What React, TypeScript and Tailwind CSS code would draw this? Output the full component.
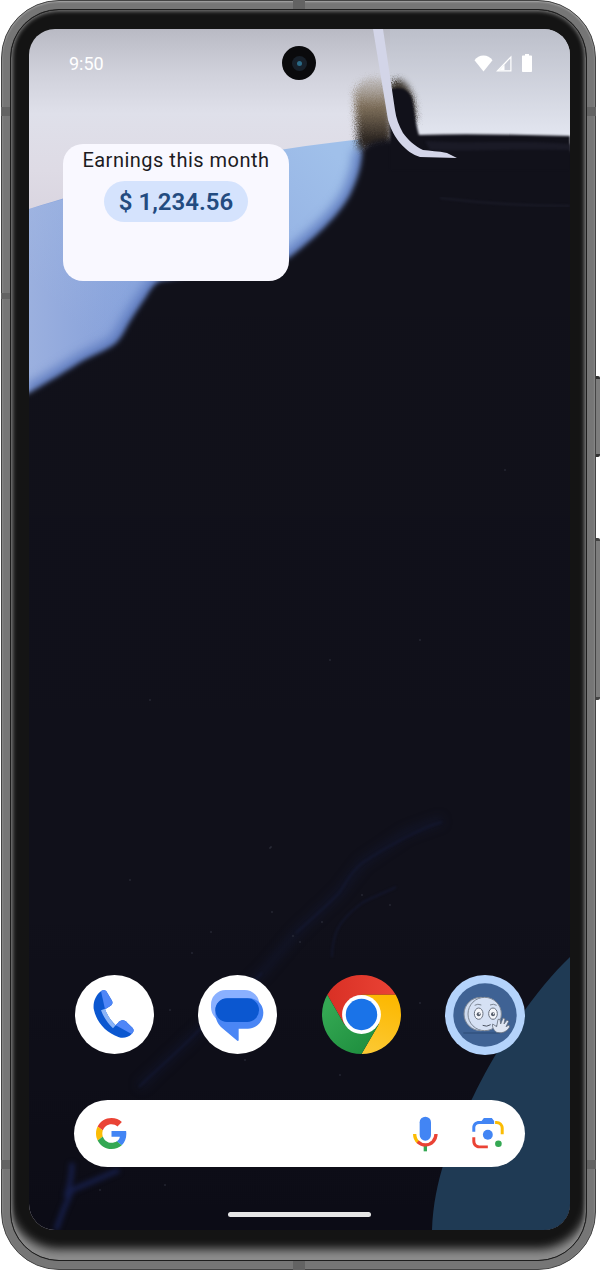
import React from "react";

const BLUE_EDGE =
  "M29 393 C50 381 65 372 79 363 C95 354 108 350 116 343 C122 337 125 330 129 323 C136 312 141 304 146 297 C150 290 154 284 160 281 L289 258 C305 245 335 222 350 195 C358 178 362 165 362 150";

function Wallpaper() {
  const stars: [number, number][] = [
    [211, 932], [270, 848], [192, 953], [170, 1010], [272, 912], [293, 936], [130, 880], [390, 905], [322, 922], [340, 1075], [420, 1003], [165, 1185], [100, 1190], [245, 1060], [505, 470], [420, 640], [150, 700], [330, 660], [271, 847], [362, 895], [300, 942],
  ];
  return (
    <svg className="absolute inset-0 w-full h-full" viewBox="29 29 541 1201" preserveAspectRatio="none">
      <defs>
        <linearGradient id="sky" x1="0" y1="29" x2="0" y2="230" gradientUnits="userSpaceOnUse">
          <stop offset="0" stopColor="#b9bac4" />
          <stop offset="0.22" stopColor="#d0d1db" />
          <stop offset="0.42" stopColor="#dfe0ea" />
          <stop offset="0.7" stopColor="#dedbe5" />
          <stop offset="1" stopColor="#d8d3de" />
        </linearGradient>
        <linearGradient id="sky2" x1="0" y1="29" x2="0" y2="140" gradientUnits="userSpaceOnUse">
          <stop offset="0" stopColor="#bcbfca" />
          <stop offset="1" stopColor="#e4e7f1" />
        </linearGradient>
        <linearGradient id="blue" x1="330" y1="150" x2="110" y2="360" gradientUnits="userSpaceOnUse">
          <stop offset="0" stopColor="#a0c0ea" />
          <stop offset="0.6" stopColor="#8fabe0" />
          <stop offset="1" stopColor="#839ed9" />
        </linearGradient>
        <linearGradient id="haze" x1="29" y1="0" x2="130" y2="0" gradientUnits="userSpaceOnUse">
          <stop offset="0" stopColor="#c8d2ea" stopOpacity="0.35" />
          <stop offset="1" stopColor="#c8d2ea" stopOpacity="0" />
        </linearGradient>
        <linearGradient id="brown" x1="0" y1="78" x2="0" y2="140" gradientUnits="userSpaceOnUse">
          <stop offset="0" stopColor="#8a7c68" stopOpacity="0.25" />
          <stop offset="0.45" stopColor="#6e5c42" stopOpacity="0.85" />
          <stop offset="1" stopColor="#2a2420" />
        </linearGradient>
        <linearGradient id="dark" x1="0" y1="130" x2="0" y2="1230" gradientUnits="userSpaceOnUse">
          <stop offset="0" stopColor="#11111a" />
          <stop offset="0.7" stopColor="#10101a" />
          <stop offset="1" stopColor="#0c0c16" />
        </linearGradient>
        <filter id="b1" colorInterpolationFilters="sRGB"><feGaussianBlur stdDeviation="1" /></filter>
        <filter id="b2" colorInterpolationFilters="sRGB"><feGaussianBlur stdDeviation="2.5" /></filter>
        <filter id="b5" colorInterpolationFilters="sRGB"><feGaussianBlur stdDeviation="5" /></filter>
        <filter id="grain" x="-30%" y="-30%" width="160%" height="160%" colorInterpolationFilters="sRGB">
          <feGaussianBlur stdDeviation="3" result="s" />
          <feTurbulence type="fractalNoise" baseFrequency="0.9" numOctaves="2" result="n" />
          <feDisplacementMap in="s" in2="n" scale="8" />
        </filter>
      </defs>
      <rect x="29" y="29" width="541" height="1201" fill="url(#sky)" />
      <rect x="390" y="29" width="180" height="112" fill="url(#sky2)" />
      <path d="M29 209 C120 180 220 155 362 139 L380 300 L29 430 Z" fill="url(#blue)" />
      <path d="M29 209 L130 180 L130 410 L29 410 Z" fill="url(#haze)" />
      <path d={BLUE_EDGE} stroke="#5b78bd" strokeWidth="18" strokeOpacity="0.8" fill="none" filter="url(#b5)" />
      <path d="M354 92 C362 76 380 72 388 84 L392 145 L358 150 Z" fill="url(#brown)" filter="url(#grain)" />
      <path d="M388 88 C396 72 408 80 414 100 L416 120 L392 130 Z" fill="#3e3830" filter="url(#grain)" />
      <path
        d={`M0 393 L${BLUE_EDGE.slice(1)} C368 142 378 140 388 140 L600 150 L600 1260 L0 1260 Z`}
        fill="url(#dark)"
        filter="url(#b2)"
      />
      <path d="M390 90 C398 86 408 88 412 98 C415 110 415 122 419 135 C470 133 520 135 570 136 L570 170 L390 170 Z" fill="#11111a" filter="url(#b1)" />
      <path d="M425 141 C470 144 520 140 570 144 L570 150 C520 148 470 152 430 150 Z" fill="#1a1a26" filter="url(#b1)" />
      <path d="M373 29 L388 120 C391 130 395 137 400 143 C406 150 413 155 420 157 L457 158 L447 153 C438 151 430 151 423 150 C415 146 408 140 403 133 C399 126 396 118 395 110 L383 29 Z" fill="#d3d5e8" />
      <path d="M440 198 C480 203 530 206 570 206" stroke="#1a1b28" strokeWidth="2" fill="none" filter="url(#b1)" />
      <path d="M442 820 L406 833 L362 863 L339 893 L296 933 L262 973 L196 1033 L139 1087" stroke="#141a36" strokeWidth="8" strokeOpacity="0.5" fill="none" filter="url(#b5)" />
      <path d="M442 822 C420 828 385 848 362 863 C350 872 345 885 339 893 C325 908 310 920 296 933 M396 887 C380 895 370 898 362 903 C350 912 340 922 336 933 C333 942 332 950 332 957 M262 973 C240 995 215 1015 196 1033 C175 1055 150 1075 139 1087" stroke="#151b3c" strokeWidth="2" fill="none" filter="url(#b1)" strokeOpacity="0.5" />
      <path d="M119 1170 C100 1178 85 1185 72 1190 C65 1205 60 1218 56 1230 M72 1163 C72 1175 70 1185 66 1197" stroke="#161e48" strokeWidth="5" fill="none" filter="url(#b2)" />
      {stars.map(([x, y]) => (
        <circle key={`${x}-${y}`} cx={x} cy={y} r="0.7" fill="#3a3d4d" />
      ))}
      <path d="M570 957 C535 990 495 1050 473 1097 C450 1140 434 1180 432 1230 L570 1230 Z" fill="#1f3a54" />
    </svg>
  );
}

function StatusIcons() {
  return (
    <div className="flex justify-end items-center pr-[38px]">
      <svg viewBox="0 0 19 17" className="w-[19px] h-[17px]">
        <path d="M9.5 16.5 L0.5 5.2 C2.6 2.2 5.8 0.5 9.5 0.5 C13.2 0.5 16.4 2.2 18.5 5.2 Z" fill="#fff" />
      </svg>
      <svg viewBox="0 0 16 17" className="w-[16px] h-[17px] ml-[3px]">
        <path d="M15.5 0.5 V16.5 H0 Z M14.3 3.4 L3.3 15.3 H14.3 Z" fill="#fff" fillRule="evenodd" />
        <path d="M8.5 9.8 V15.3 H3.3 Z" fill="#fff" />
      </svg>
      <svg viewBox="0 0 10 18" className="w-[10px] h-[18px] ml-[10px]">
        <path d="M3 0 H7 V1.6 H9 C9.6 1.6 10 2 10 2.6 V17 C10 17.6 9.6 18 9 18 H1 C0.4 18 0 17.6 0 17 V2.6 C0 2 0.4 1.6 1 1.6 H3 Z" fill="#fff" />
      </svg>
    </div>
  );
}

function PhoneIcon() {
  return (
    <svg viewBox="44 45 237 237" className="w-[79px] h-[79px]">
      <circle cx="162.5" cy="163.5" r="118.5" fill="#fff" />
      <path d="M118 97 C124 90 132 88 138 94 L155 122 C158 128 156 134 150 138 L134 148 C142 168 152 182 166 196 L178 184 C184 180 190 180 196 184 L217 204 C222 210 220 216 214 222 C204 232 190 236 176 232 C134 216 108 186 100 146 C98 126 106 108 118 97 Z" fill="#0b57d0" />
      <path d="M122 94 C128 88 134 90 138 94 L155 122 C158 128 156 134 150 138 L134 148 Z" fill="#4f86f7" />
      <path d="M166 196 L178 184 C184 180 190 180 196 184 L217 204 C222 210 220 216 214 222 Z" fill="#4f86f7" />
      <path d="M122 151 L134 146 C142 168 152 182 166 196 L158 205 C142 190 130 172 122 151 Z" fill="#8ab4f8" />
    </svg>
  );
}

function MessagesIcon() {
  return (
    <svg viewBox="415 45 237 237" className="w-[79px] h-[79px]">
      <circle cx="533.5" cy="163.5" r="118.5" fill="#fff" />
      <rect x="454" y="90" width="145" height="96" rx="44" fill="#8ab0ff" />
      <path d="M505 115 H570 C593 115 611 135 611 158 C611 185 590 206 565 206 H537 V240 C537 243 534 244 531 241 L490 206 C476 196 467 178 467 160 L467 150 C467 130 484 115 505 115 Z" fill="#4a86f5" />
      <rect x="467" y="115" width="131" height="71" rx="35" fill="#0b57d0" />
    </svg>
  );
}

function ChromeIcon() {
  return (
    <svg viewBox="-39.5 -39.5 79 79" className="w-[79px] h-[79px]">
      <defs>
        <linearGradient id="cr" x1="-34" y1="0" x2="34" y2="0" gradientUnits="userSpaceOnUse">
          <stop offset="0" stopColor="#d93025" />
          <stop offset="1" stopColor="#ea4335" />
        </linearGradient>
        <linearGradient id="cg" x1="-32" y1="-10" x2="8" y2="38" gradientUnits="userSpaceOnUse">
          <stop offset="0" stopColor="#34a853" />
          <stop offset="1" stopColor="#1e8e3e" />
        </linearGradient>
        <linearGradient id="cy" x1="25" y1="-20" x2="5" y2="39" gradientUnits="userSpaceOnUse">
          <stop offset="0" stopColor="#fcb800" />
          <stop offset="1" stopColor="#fcc934" />
        </linearGradient>
      </defs>
      <path d="M-34.2 -19.75 A39.5 39.5 0 0 1 34.2 -19.75 L0 -19.75 L-17.1 9.88 Z" fill="url(#cr)" />
      <path d="M34.2 -19.75 A39.5 39.5 0 0 1 0 39.5 L17.1 9.88 L0 -19.75 Z" fill="url(#cy)" />
      <path d="M0 39.5 A39.5 39.5 0 0 1 -34.2 -19.75 L-17.1 9.88 L17.1 9.88 Z" fill="url(#cg)" />
      <circle r="19.4" fill="#fff" />
      <circle r="15.7" fill="#1a73e8" />
    </svg>
  );
}

function FaceIcon() {
  return (
    <svg viewBox="15 15 240 240" className="w-[80px] h-[80px]">
      <circle cx="135" cy="135" r="120" fill="#b4d3fb" />
      <circle cx="135" cy="135" r="95" fill="#3f6294" />
      <path d="M70 189 H180" stroke="#2d4a74" strokeWidth="3" />
      <circle cx="122" cy="132" r="50" fill="#cfdbef" stroke="#7e8794" strokeWidth="3" />
      <circle cx="134" cy="132" r="50" fill="#d6e1f4" stroke="#7e8794" strokeWidth="3" />
      <ellipse cx="116" cy="131" rx="13" ry="17" fill="#f4f6fb" stroke="#6a7280" strokeWidth="3" />
      <ellipse cx="159" cy="131" rx="13" ry="17" fill="#f4f6fb" stroke="#6a7280" strokeWidth="3" />
      <circle cx="116" cy="133" r="6" fill="#565e6c" />
      <circle cx="159" cy="133" r="6" fill="#565e6c" />
      <circle cx="118" cy="131" r="2.2" fill="#fff" />
      <circle cx="161" cy="131" r="2.2" fill="#fff" />
      <path d="M104 106 Q113 100 124 105 M150 105 Q160 100 170 106" stroke="#6a7280" strokeWidth="2.5" fill="none" />
      <path d="M128 166 Q140 172 152 164" stroke="#4c5462" strokeWidth="3" fill="none" />
      <path d="M170 187 C160 180 156 170 158 162 L170 170 L174 148 L180 148 L182 162 L189 144 L195 146 L192 162 L201 150 L206 154 L198 170 L207 165 L209 171 C202 182 190 192 170 187 Z" fill="#dfe6f3" stroke="#6a7280" strokeWidth="2.5" strokeLinejoin="round" />
    </svg>
  );
}

function GoogleG() {
  return (
    <svg viewBox="0 0 48 48" className="w-[31px] h-[31px]">
      <path fill="#EA4335" d="M24 9.5c3.54 0 6.71 1.22 9.21 3.6l6.85-6.85C35.9 2.38 30.47 0 24 0 14.62 0 6.51 5.38 2.56 13.22l7.98 6.19C12.43 13.72 17.74 9.5 24 9.5z" />
      <path fill="#4285F4" d="M46.98 24.55c0-1.57-.15-3.09-.38-4.55H24v9.02h12.94c-.58 2.96-2.26 5.48-4.78 7.18l7.73 6c4.51-4.18 7.09-10.36 7.09-17.65z" />
      <path fill="#FBBC05" d="M10.53 28.59c-.48-1.45-.76-2.99-.76-4.59s.27-3.14.76-4.59l-7.98-6.19C.92 16.46 0 20.12 0 24c0 3.88.92 7.54 2.56 10.78l7.97-6.19z" />
      <path fill="#34A853" d="M24 48c6.48 0 11.93-2.13 15.89-5.81l-7.73-6c-2.15 1.45-4.92 2.3-8.16 2.3-6.26 0-11.57-4.22-13.47-9.91l-7.98 6.19C6.51 42.62 14.62 48 24 48z" />
    </svg>
  );
}

function MicIcon() {
  return (
    <svg viewBox="30 70 90 120" className="w-[30px] h-[40px]">
      <rect x="56" y="78" width="34" height="72" rx="17" fill="#4285f4" />
      <rect x="68" y="160" width="10" height="22" fill="#34a853" />
      <path d="M41 130 C41 142 46 150 52 155" stroke="#fbbc04" strokeWidth="10" fill="none" />
      <path d="M50 153 C64 166 84 166 96 153 C102 146 105 138 105 130" stroke="#ea4335" strokeWidth="10" fill="none" />
    </svg>
  );
}

function LensIcon() {
  return (
    <svg viewBox="205 75 115 110" className="w-[38px] h-[37px]">
      <path d="M215 125 V112 C215 100 224 92 236 92 H243 L250 83 H274 L281 92 V101 H236 C229 101 224 106 224 112 V125 Z" fill="#4285f4" />
      <path d="M284 92 H288 C300 92 310 102 310 113 V132 H301 V113 C301 106 295 101 288 101 H284 Z" fill="#fbbc04" />
      <path d="M215 141 H224 V153 C224 161 229 166 236 166 H262 V175 H236 C224 175 215 166 215 153 Z" fill="#ea4335" />
      <circle cx="262" cy="134" r="15" fill="#4285f4" />
      <circle cx="294" cy="161" r="10" fill="#34a853" />
    </svg>
  );
}

export default function App() {
  return (
    <div className="relative w-[600px] h-[1271px] bg-white overflow-hidden font-[Roboto,sans-serif]">
      {/* side buttons */}
      <div className="absolute left-[596px] top-[376px] w-[4px] h-[81px] bg-[#7d7d7d] border-y-[3px] border-[#333] rounded-r-[2px]" />
      <div className="absolute left-[596px] top-[538px] w-[4px] h-[162px] bg-[#7d7d7d] border-y-[3px] border-[#444] rounded-r-[2px]" />

      {/* body */}
      <div className="ml-px w-[595px] h-[1270px] rounded-[58px] bg-[#767676] border border-[#444] p-2 shadow-[inset_0_1px_2px_#aaa]">
        {/* bezel */}
        <div className="w-full h-full rounded-[49px] border border-[#1e1e1e] bg-[#141414] pl-[18px] pr-4 pt-[19px] pb-[30px] shadow-[inset_0_-14px_10px_-3px_#8c8c8c,inset_0_0_4px_1px_#8a8a8a]">
          {/* screen */}
          <div className="relative w-[541px] h-[1201px] rounded-[26px] overflow-hidden">
            <Wallpaper />
            <div className="relative h-full flex flex-col">
              <div className="grid grid-cols-3 items-center h-[68px]">
                <span className="pl-[40px] text-[18px] leading-[22px] pt-[1px] text-white">9:50</span>
                <div className="flex justify-center">
                  <div className="w-[34px] h-[34px] rounded-full bg-[#0a0a0c] flex items-center justify-center">
                    <div className="w-[15px] h-[15px] rounded-full bg-[#17202a] flex items-center justify-center">
                      <div className="w-[5px] h-[5px] rounded-full bg-[#2b6a86]" />
                    </div>
                  </div>
                </div>
                <StatusIcons />
              </div>

              <div className="ml-[34px] mt-[47px] w-[226px] h-[137px] rounded-[20px] bg-[#f9f8ff] flex flex-col items-center">
                <div className="h-[32px] leading-[32px] text-[20px] tracking-[0.5px] text-[#1c1b22]">Earnings this month</div>
                <div className="mt-[5px] w-[144px] h-[41px] rounded-full bg-[#d5e3fd] flex items-center justify-center text-[24px] font-semibold text-[#234b80]">
                  $ 1,234.56
                </div>
              </div>

              <div className="mt-auto pl-[46px] pr-[45px] flex justify-between items-start">
                <PhoneIcon />
                <MessagesIcon />
                <ChromeIcon />
                <FaceIcon />
              </div>

              <div className="mt-[45px] ml-[45px] w-[451px] h-[67px] rounded-full bg-white flex items-center pl-[22px] pr-[18px]">
                <GoogleG />
                <div className="ml-auto">
                  <MicIcon />
                </div>
                <div className="ml-[28px]">
                  <LensIcon />
                </div>
              </div>

              <div className="mt-[45px] mb-[13px] self-center w-[143px] h-[5px] rounded-full bg-[#e6e6e6]" />
            </div>
          </div>
        </div>
      </div>

      {/* antenna bands over the body */}
      <div className="absolute left-px top-[107px] w-[9px] h-[9px] bg-[#636363]" />
      <div className="absolute left-px top-[293px] w-[9px] h-[6px] bg-[#636363]" />
      <div className="absolute left-[587px] top-[107px] w-[9px] h-[9px] bg-[#636363]" />
      <div className="absolute left-px top-[1160px] w-[9px] h-[9px] bg-[#636363]" />
      <div className="absolute left-[587px] top-[1160px] w-[9px] h-[9px] bg-[#636363]" />
      <div className="absolute left-[293px] top-0 w-[12px] h-[9px] bg-[#636363]" />
      <div className="absolute left-[293px] top-[1261px] w-[12px] h-[9px] bg-[#636363]" />
    </div>
  );
}
